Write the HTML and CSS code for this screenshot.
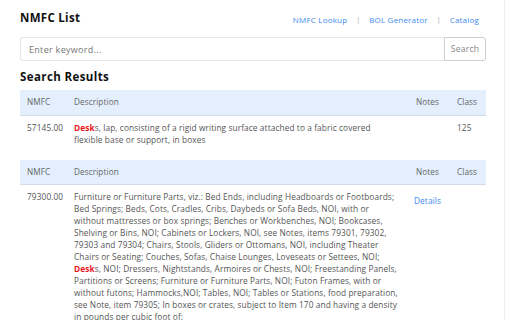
FILE: index.html
```html
<!DOCTYPE html>
<html>
<head>
<meta charset="utf-8">
<link rel="stylesheet" href="styles.css">
</head>
<body>
<div class="page">
  <main class="main">
    <header class="top">
      <h1 class="title">NMFC List</h1>
      <nav class="nav">
        <a class="nav-link">NMFC Lookup</a>
        <span class="sep">|</span>
        <a class="nav-link">BOL Generator</a>
        <span class="sep">|</span>
        <a class="nav-link">Catalog</a>
      </nav>
    </header>
    <form class="search">
      <input class="search-input" type="text" placeholder="Enter keyword...">
      <button class="search-btn" type="button">Search</button>
    </form>
    <h2 class="results-title">Search Results</h2>

    <table class="result">
      <colgroup><col class="c-nmfc"><col class="c-desc"><col class="c-notes"><col class="c-class"></colgroup>
      <thead>
        <tr><th>NMFC</th><th>Description</th><th class="center">Notes</th><th>Class</th></tr>
      </thead>
      <tbody>
        <tr>
          <td>57145.00</td>
          <td><b class="hl">Desk</b>s, lap, consisting of a rigid writing surface attached to a fabric covered flexible base or support, in boxes</td>
          <td class="center"></td>
          <td>125</td>
        </tr>
      </tbody>
    </table>

    <table class="result">
      <colgroup><col class="c-nmfc"><col class="c-desc"><col class="c-notes"><col class="c-class"></colgroup>
      <thead>
        <tr><th>NMFC</th><th>Description</th><th class="center">Notes</th><th>Class</th></tr>
      </thead>
      <tbody>
        <tr>
          <td>79300.00</td>
          <td>Furniture or Furniture Parts, viz.: Bed Ends, including Headboards or Footboards; Bed Springs; Beds, Cots, Cradles, Cribs, Daybeds or Sofa Beds, NOI, with or without mattresses or box springs; Benches or Workbenches, NOI; Bookcases, Shelving or Bins, NOI; Cabinets or Lockers, NOI, see Notes, items 79301, 79302, 79303 and 79304; Chairs, Stools, Gliders or Ottomans, NOI, including Theater Chairs or Seating; Couches, Sofas, Chaise Lounges, Loveseats or Settees, NOI; <b class="hl">Desk</b>s, NOI; Dressers, Nightstands, Armoires or Chests, NOI; Freestanding Panels, Partitions or Screens; Furniture or Furniture Parts, NOI; Futon Frames, with or without futons; Hammocks,NOI; Tables, NOI; Tables or Stations, food preparation, see Note, item 79305; In boxes or crates, subject to Item 170 and having a density in pounds per cubic foot of:</td>
          <td class="center"><a class="details">Details</a></td>
          <td></td>
        </tr>
      </tbody>
    </table>
  </main>
  <div class="rail"></div>
</div>
</body>
</html>
```
FILE: styles.css
```css
* { box-sizing: border-box; }
html, body { margin: 0; padding: 0; height: 100%; overflow: hidden; }
body {
  font-family: "Open Sans", "DejaVu Sans", sans-serif;
  color: #555;
  background: #fff;
}
.page { display: flex; height: 320px; }
.main { flex: 0 0 504px; padding: 0 18px 0 20px; }
.rail { flex: 1; border-left: 1px solid #efefef; }

.top {
  display: flex;
  justify-content: space-between;
  align-items: center;
  height: 34px;
  padding-top: 1px;
}
.title {
  margin: 0;
  font-size: 11.5px;
  font-weight: 700;
  letter-spacing: 0.3px;
  color: #111;
}
.nav { display: flex; align-items: center; gap: 9px; padding-right: 7px; padding-top: 4px; }
.nav-link { font-size: 8px; letter-spacing: 0.2px; color: #3d8af0; }
.sep { font-size: 7px; color: #999; }

.search { display: flex; height: 24px; margin-top: 3px; }
.search-input {
  flex: 1;
  height: 24px;
  border: 1px solid #e6e6e6;
  border-right: none;
  border-radius: 3px 0 0 3px;
  padding: 0 8px;
  font-family: inherit;
  font-size: 9px;
  letter-spacing: 0.3px;
  color: #555;
  outline: none;
}
.search-input::placeholder { color: #777; }
.search-btn {
  width: 42px;
  height: 24px;
  border: 1px solid #cfcfcf;
  border-radius: 0 3px 3px 0;
  background: #fff;
  font-family: inherit;
  font-size: 8.6px;
  letter-spacing: 0.2px;
  color: #888;
  padding: 0;
}

.results-title {
  margin: 9px 0 6px;
  font-size: 11.5px;
  font-weight: 700;
  letter-spacing: 0.4px;
  color: #111;
  line-height: 14px;
}

.result {
  width: 100%;
  table-layout: fixed;
  border-collapse: collapse;
  margin-bottom: 8px;
  font-size: 8.3px;
  letter-spacing: 0.1px;
  line-height: 12px;
}
.c-nmfc { width: 47px; }
.c-desc { width: 338px; }
.c-notes { width: 45px; }
.c-class { width: 36px; }
.result th {
  background: #e3effd;
  border-bottom: 1px solid #d3dde8;
  font-weight: 400;
  font-size: 8.2px;
  color: #666;
  text-align: left;
  height: 25px;
  padding: 0 7px;
}
.result td {
  vertical-align: top;
  padding: 6px 7px;
  color: #555;
}
.result .center { text-align: center; padding: 0; }
.result td.center { padding-top: 10px; }
.hl { color: #e8141b; font-weight: 700; }
.details { color: #3d8af0; }
```
